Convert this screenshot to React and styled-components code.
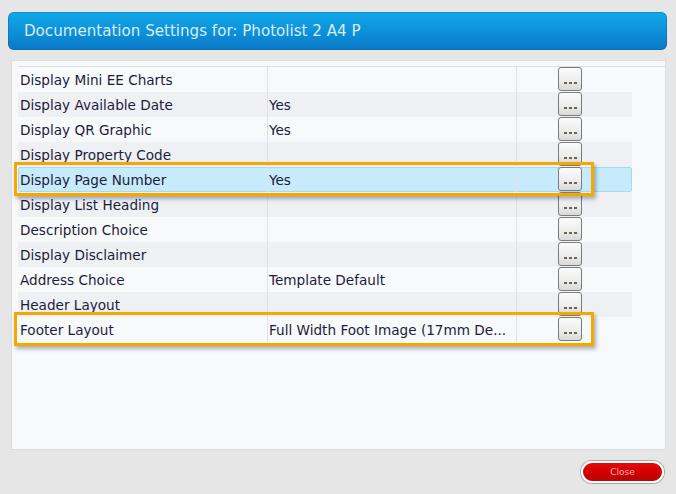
import React from 'react';
import styled, { createGlobalStyle } from 'styled-components';

const GlobalStyle = createGlobalStyle`
  html, body {
    margin: 0;
    padding: 0;
    background: #e6e6e6;
  }
  body {
    font-family: "DejaVu Sans", Verdana, sans-serif;
  }
`;

const Page = styled.div`
  width: 676px;
  height: 494px;
  box-sizing: border-box;
  padding: 12px 9px 0 8px;
  display: flex;
  flex-direction: column;
`;

const Header = styled.div`
  height: 38px;
  border-radius: 6px;
  background: linear-gradient(#12a9e9, #0d8fd8 55%, #0a78c6);
  box-shadow: inset 0 0 0 1px rgba(0, 90, 160, 0.35);
  display: flex;
  align-items: center;
  padding-left: 16px;
  color: #d9edf9;
  font-size: 15.1px;
`;

const Panel = styled.div`
  margin: 10px 1px 0 3px;
  height: 390px;
  box-sizing: border-box;
  background: #f8f9fb;
  border: 1px solid #dcdcde;
  padding: 5px 0 0 6px;
`;

const Table = styled.div`
  border-top: 1px solid #dedde2;
  display: flex;
  flex-direction: column;
`;

const Row = styled.div`
  position: relative;
  width: 614px;
  height: 25px;
  box-sizing: border-box;
  display: grid;
  grid-template-columns: 249px 249px 1fr;
  background: ${p => (p.$selected ? '#c8ebfb' : p.$alt ? '#eef0f4' : 'transparent')};
  border: 1px solid ${p => (p.$selected ? '#a4dbf4' : 'transparent')};
  border-radius: ${p => (p.$selected ? '2px' : '0')};

  ${p => p.$marked && `
    &::after {
      content: '';
      position: absolute;
      left: -5px;
      top: -6px;
      width: 574px;
      height: 28px;
      border: 3px solid #f5a800;
      box-shadow: 2px 3px 4px rgba(0, 0, 0, 0.3);
      pointer-events: none;
      z-index: 2;
    }
  `}
`;

const Cell = styled.div`
  font-size: 13.6px;
  color: #1c1c3a;
  display: flex;
  align-items: center;
  padding-left: 1px;
  white-space: nowrap;
  overflow: hidden;
  border-right: 1px solid #e2e2e6;
  margin: -1px 0;
`;

const ButtonCell = styled.div`
  display: flex;
  align-items: flex-start;
  padding-left: 41px;
  margin: -1px 0;
`;

const MoreButton = styled.button`
  position: relative;
  z-index: 1;
  width: 24px;
  height: 24px;
  padding: 0 0 6px 0;
  box-sizing: border-box;
  border: 1px solid #7b7b7b;
  border-radius: 3px;
  background: linear-gradient(#fbfbfb, #ececec 60%, #d9d9d9);
  display: flex;
  align-items: flex-end;
  justify-content: center;
  gap: 2px;
`;

const Dot = styled.span`
  width: 3px;
  height: 2px;
  background: #6e6252;
`;

const Footer = styled.div`
  display: flex;
  justify-content: flex-end;
  padding: 11px 3px 0 0;
`;

const CloseButton = styled.button`
  width: 83px;
  height: 22px;
  border-radius: 11px;
  border: 2px solid #ffffff;
  box-shadow: 0 0 0 1px #a9a9a9;
  background: linear-gradient(#e80808, #d00000 55%, #b80606);
  color: #f3b2b2;
  font-family: "DejaVu Sans", Verdana, sans-serif;
  font-size: 9px;
  padding: 0;
`;

const rows = [
  { name: 'Display Mini EE Charts', value: '' },
  { name: 'Display Available Date', value: 'Yes' },
  { name: 'Display QR Graphic', value: 'Yes' },
  { name: 'Display Property Code', value: '' },
  { name: 'Display Page Number', value: 'Yes', selected: true, marked: true },
  { name: 'Display List Heading', value: '' },
  { name: 'Description Choice', value: '' },
  { name: 'Display Disclaimer', value: '' },
  { name: 'Address Choice', value: 'Template Default' },
  { name: 'Header Layout', value: '' },
  { name: 'Footer Layout', value: 'Full Width Foot Image (17mm De...', marked: true },
];

const App = () => {
  return (
    <>
      <GlobalStyle />
      <Page>
        <Header>Documentation Settings for: Photolist 2 A4 P</Header>
        <Panel>
          <Table>
            {rows.map((r, i) => (
              <Row key={i} $alt={i % 2 === 1} $selected={r.selected} $marked={r.marked}>
                <Cell>{r.name}</Cell>
                <Cell>{r.value}</Cell>
                <ButtonCell>
                  <MoreButton>
                    <Dot />
                    <Dot />
                    <Dot />
                  </MoreButton>
                </ButtonCell>
              </Row>
            ))}
          </Table>
        </Panel>
        <Footer>
          <CloseButton>Close</CloseButton>
        </Footer>
      </Page>
    </>
  );
};

export default App;
